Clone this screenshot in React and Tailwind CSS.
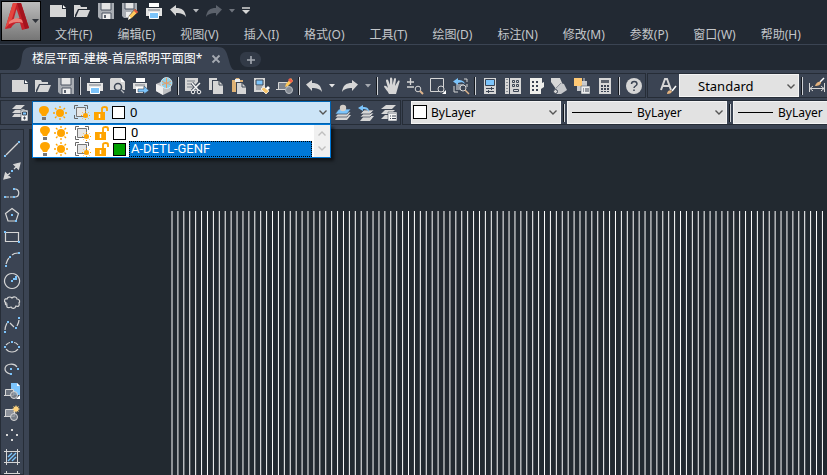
import { useState } from 'react';

const GREY = '#d6d6d6';
const BLUE = '#7cc4fb';
const ORANGE = '#ffa400';
const DARK = '#3b4453';

const Icon = ({ children, className = 'w-4 h-4', box = '0 0 16 16' }) => (
  <svg viewBox={box} className={`${className} shrink-0 overflow-visible`} fill="none" aria-hidden="true">
    {children}
  </svg>
);

/* File icons */
const NewIcon = () => (
  <Icon>
    <path d="M0 2h12v4h4v8H0z" fill={GREY} />
    <path d="M13 2l3 3h-3z" fill="#fff" />
  </Icon>
);

const OpenIcon = () => (
  <Icon>
    <path d="M0 2h6l1 2h6v2H4l-3 6v2H0z" fill={GREY} />
    <path d="M5 7h11l-3 7H2z" fill={GREY} />
  </Icon>
);

const SaveIcon = () => (
  <Icon>
    <path d="M0 0h16v16H2l-2-2z" fill="#a9adb3" />
    <path d="M3 0h10v7H3z" fill="#e4e4e4" />
    <path d="M3 0v7h10V0" stroke="#4b5361" />
    <path d="M4 10h9v6H4z" fill="#eee" />
    <path d="M4 16v-6h9v6" stroke="#4b5361" />
    <path d="M6 12h2v3H6z" fill="#59606c" />
  </Icon>
);

const SaveAsIcon = () => (
  <Icon>
    <path d="M0 0h15v7l-7 8H2l-2-2z" fill="#a9adb3" />
    <path d="M3 0h9v6H3z" fill="#e4e4e4" />
    <path d="M3 0v6h9V0" stroke="#4b5361" />
    <path d="M4 9h5v5H4z" fill="#eee" />
    <path d="M13 6l3 3-6 6-4 2 1-4z" fill="#ffc85a" stroke="#222933" strokeWidth=".5" />
    <path d="M13 6l3 3-1.500 1.500-3-3z" fill="#e2593f" />
    <path d="M7 13l2 2-3 2z" fill="#fff" />
  </Icon>
);

const PrintIcon = () => (
  <Icon>
    <path d="M3 0h10v4H3z" fill="#fff" />
    <path d="M0 5h16v8H0z" fill="#e4e4e4" />
    <path d="M2 7h12" stroke="#777d87" />
    <path d="M3.500 9.500h9v6h-9z" fill={BLUE} stroke="#fff" />
  </Icon>
);

const PreviewIcon = () => (
  <Icon>
    <path d="M1 0h10l4 4v8H0V1z" fill={GREY} />
    <path d="M11 0l4 4h-4z" fill="#fff" />
    <circle cx="8" cy="9" r="3.500" fill={GREY} stroke={DARK} strokeWidth="1.500" />
    <path d="M10.500 11.500l4 4" stroke={DARK} strokeWidth="3" />
    <path d="M11 12l3 3" stroke="#b4b8be" strokeWidth="1.200" />
  </Icon>
);

const PublishIcon = () => (
  <Icon>
    <path d="M3 0h9v4H3z" fill="#fff" />
    <path d="M0 5h14v6H0z" fill="#dedede" />
    <path d="M2 7h10" stroke="#777d87" />
    <path d="M3 9h7v6H3z" fill="#fff" />
    <path d="M5 11h6V8l5 4.500-5 3.500v-2H5z" fill={BLUE} stroke={DARK} strokeWidth=".6" />
  </Icon>
);

const GlobeIcon = () => (
  <Icon>
    <path d="M0 6l7-3 8 3v7l-8 4-7-4z" fill="#bfc1c4" />
    <path d="M0 6l7 3v8l-7-4z" fill="#ededed" />
    <circle cx="10.500" cy="5" r="5.500" fill="#8fd0e8" stroke="#dff3fa" strokeWidth=".8" />
    <path d="M6 3c3 3 6 2 9 0M6 7c3-2 6-2 9 0M10.500 0v10" stroke="#e99a62" />
  </Icon>
);

const CutIcon = () => (
  <Icon>
    <path d="M0 0h13v13H0z" fill={GREY} />
    <path d="M2 3h8M2 6h7M2 9h6" stroke="#7b818a" />
    <path d="M7 5l7 8M14 5l-7 8" stroke={DARK} strokeWidth="3" />
    <path d="M7 5l7 8M15 5l-8 8" stroke="#f5f5f5" strokeWidth="1.500" />
    <circle cx="8" cy="14" r="1.800" fill={DARK} stroke="#f5f5f5" />
    <circle cx="14" cy="14" r="1.800" fill={DARK} stroke="#f5f5f5" />
  </Icon>
);

const CopyIcon = () => (
  <Icon>
    <path d="M1 0h8v2H4v10H1z" fill={GREY} />
    <path d="M5 3h6l4 4v9H5z" fill={GREY} />
    <path d="M11 3v4h4" stroke={DARK} />
  </Icon>
);

const PasteIcon = () => (
  <Icon>
    <path d="M1 2h3l1-2h3l1 2h3v2H5v10H1z" fill="#dfb275" />
    <path d="M4 1h5v3H4z" fill="#eee" />
    <path d="M6 5h5l4 4v7H6z" fill={GREY} />
    <path d="M11 5v4h4" stroke={DARK} />
  </Icon>
);

const MatchIcon = () => (
  <Icon>
    <path d="M0 0h11v14H0z" fill={GREY} />
    <path d="M2 2h7v5H2z" fill={BLUE} stroke={DARK} />
    <path d="M2 9h6M2 11h5" stroke="#6f7681" />
    <path d="M14 8l2 2-3 3-2-2z" fill="#fff" />
    <path d="M7 11l3-2 5 4-3 3z" fill="#f7c66f" stroke="#fff" strokeWidth=".7" />
  </Icon>
);

const BlockEditIcon = () => (
  <Icon>
    <path d="M1.500 4.500h9v7h-9zM-1 11.500h3" fill="#7c828c" stroke={GREY} />
    <circle cx="12" cy="12" r="3.500" fill="#858b94" stroke="#b9bdc3" />
    <path d="M14 0l2 3-5 5-3 1 1-3z" fill="#ffc85a" />
    <path d="M13 0l3 3-2 2-3-3z" fill="#f0604c" />
  </Icon>
);

const UndoIcon = ({ color = GREY }) => (
  <Icon>
    <path d="M0 6.500L6 2v3c6 0 9 2 10 9-2-3-5-4-10-4v3z" fill={color} />
  </Icon>
);

const RedoIcon = ({ color = GREY }) => (
  <Icon>
    <path d="M16 6.500L10 2v3C4 5 1 7 0 14c2-3 5-4 10-4v3z" fill={color} />
  </Icon>
);

const CaretIcon = ({ color = '#e4e4e4' }) => (
  <Icon className="w-[6px] h-[4px]" box="0 0 6 4">
    <path d="M0 0h6L3 3.500z" fill={color} />
  </Icon>
);

const CustomizeIcon = () => (
  <Icon className="w-2 h-2" box="0 0 8 8">
    <path d="M0 1h8" stroke={GREY} strokeWidth="1.500" />
    <path d="M0 3h8L4 7z" fill={GREY} />
  </Icon>
);

/* View icons */
const PanIcon = () => (
  <Icon>
    <path d="M5 16c-1-3-5-6-5-8 2-1 3 1 4 2L2 3c0-2 2-2 2.500 0L6 7V1c0-2 2-2 2.300 0L8.500 7l1.500-6c.5-1.500 2-1 2 .5L11 8l3-5c1-1 2 0 1.500 1L12 16z" fill={GREY} />
  </Icon>
);

const ZoomIcon = () => (
  <Icon>
    <path d="M0 4h7M3.500 0v7M0 9h7" stroke={GREY} strokeWidth="1.300" />
    <circle cx="11" cy="11" r="2.800" stroke={GREY} />
    <path d="M13 13l3 3" stroke="#dfb58c" strokeWidth="2" />
  </Icon>
);

const ZoomWindowIcon = () => (
  <Icon>
    <path d="M.5.5h13v13H.5z" stroke={GREY} />
    <circle cx="11" cy="11" r="3" fill={DARK} stroke={GREY} />
    <path d="M16 12v4h-4z" fill="#fff" />
  </Icon>
);

const ZoomPreviousIcon = () => (
  <Icon>
    <path d="M11 1h3v3M1 8v6h4M14 6v3" stroke={GREY} />
    <path d="M3 6h8v6H3z" fill="#8f959e" />
    <path d="M0 3.500L5 0v2c4 0 6 1 7 4-2-2-4-2-7-1v2z" fill={BLUE} />
    <circle cx="10" cy="10" r="3" fill={DARK} stroke={GREY} />
    <path d="M12 12l4 4" stroke="#dfb58c" strokeWidth="1.500" />
  </Icon>
);

const PropertiesIcon = () => (
  <Icon>
    <path d="M2 0h12v16H2z" fill={GREY} />
    <path d="M3.500 1.500h9v6h-9z" fill={BLUE} stroke={DARK} />
    <path d="M4 10.500h8M4 13.500h8M9.500 9v3M6.500 12v3" stroke={DARK} />
  </Icon>
);

const DesignCenterIcon = () => (
  <Icon>
    <path d="M0 0h4v16H0zM5 0h11v16H5z" fill={GREY} />
    <path d="M2 1v14" stroke={DARK} strokeDasharray="1 2" />
    <path d="M7.500 2.500h2v2h-2zM11.500 2.500h2v2h-2zM7.500 6.500h2v2h-2zM11.500 6.500h2v2h-2zM8.500 11.500h5v2h-5z" stroke={DARK} />
  </Icon>
);

const PalettesIcon = () => (
  <Icon>
    <path d="M2 0h12v5l2-1v5l-3 2v5H2z" fill="#efefec" />
    <path d="M4 3h2v2H4zM8 3h2v2H8zM4 7h2v2H4zM8 7h2v2H8zM4 11h2v2H4zM8 11h2v2H8z" fill={DARK} />
  </Icon>
);

const SheetSetIcon = () => (
  <Icon>
    <path d="M0 0h9l2 5-6 6-5-7z" fill={GREY} />
    <path d="M3 13L10 5l3 1 3 6-6 4H5z" fill="#c6c8cb" />
    <path d="M10 5l-7 7" stroke="#8b9099" />
    <circle cx="4.500" cy="13.500" r="2" fill={GREY} stroke={DARK} />
  </Icon>
);

const MarkupIcon = () => (
  <Icon>
    <path d="M5 3h8v6H5zM3 8h5v5H3z" fill="#c7c9cc" />
    <path d="M0 0h8v8H0z" fill="#ffc974" />
    <path d="M10 0v5" stroke={GREY} />
    <path d="M7 8h9v8H7z" fill="#eee" stroke={DARK} strokeWidth=".5" />
    <path d="M9 11h1M11 11h4M9 13h1M11 13h4" stroke={DARK} />
  </Icon>
);

const CalcIcon = () => (
  <Icon>
    <path d="M2 0h12v16H2z" fill={GREY} />
    <path d="M4 2h8v3H4z" fill="#5b626d" />
    <path d="M4 7h2v2H4zM7 7h2v2H7zM10 7h2v2h-2zM4 10h2v2H4zM7 10h2v2H7zM10 10h2v2h-2zM4 13h2v1H4zM7 13h2v1H7zM10 13h2v1h-2z" fill={DARK} />
  </Icon>
);

const HelpIcon = () => (
  <Icon>
    <circle cx="8" cy="8" r="8" fill={GREY} />
    <path d="M5.500 6c0-3.500 5.500-3.500 5.500 0 0 2-3 2-3 4M8 11.500v1.500" stroke={DARK} strokeWidth="1.500" />
  </Icon>
);

const TextStyleIcon = () => (
  <Icon>
    <path d="M1 12L5 1h2l4 11M3 8h6" stroke={GREY} strokeWidth="2" />
    <path d="M16 8l-4 5" stroke="#fff" strokeWidth="1.500" />
    <path d="M7 16c0-3 3-5 5-3 0 2-2 3-5 3z" fill="#e4b27d" />
  </Icon>
);

const DimStyleIcon = () => (
  <Icon>
    <path d="M0.500 5v9M15.500 5v9M1 10.500h14M4 8l-3 2.500L4 13M12 8l3 2.500-3 2.500" stroke={GREY} />
    <path d="M15 0l-4 4" stroke="#fff" strokeWidth="1.500" />
    <path d="M6 8c1-3 3-5 6-4 0 3-3 4-6 4z" fill="#e4b27d" />
  </Icon>
);

/* Layer icons */
const LayerPropsIcon = () => (
  <Icon>
    <path d="M4 0h9l-4 4H0zM4 4h9l-4 4H0zM3 8h6v4H0z" fill={GREY} />
    <path d="M0 4.500h9l4-4M0 8.500h9" stroke={DARK} strokeWidth=".8" />
    <path d="M9 5h7v11H9z" fill="#f5f5f5" stroke={DARK} strokeWidth=".6" />
    <path d="M10.500 7h4v3h-4z" fill={BLUE} stroke={DARK} />
    <path d="M11 13h3M12.500 11.500v3" stroke={DARK} />
  </Icon>
);

const LayerCurrentIcon = () => (
  <Icon>
    <path d="M4 10h12l-4 5H0z" fill={GREY} />
    <path d="M4 7h12l-4 5H0z" fill={GREY} stroke={DARK} strokeWidth=".7" />
    <path d="M4 4h12l-4 5H0z" fill={BLUE} stroke={DARK} strokeWidth=".7" />
    <circle cx="8" cy="3" r="3.200" fill="#d5cfc8" />
  </Icon>
);

const LayerPreviousIcon = () => (
  <Icon>
    <path d="M6 11h10l-4 5H2z" fill={GREY} />
    <path d="M6 8h10l-4 4H2z" fill={GREY} stroke={DARK} strokeWidth=".7" />
    <path d="M6 5h10l-4 4H2z" fill={GREY} stroke={DARK} strokeWidth=".7" />
    <path d="M0 3l5-3v2c4 0 6 1 6 5-1-2-3-3-6-3v2z" fill={BLUE} />
  </Icon>
);

const LayerStatesIcon = () => (
  <Icon>
    <path d="M5 0h10l-4 4H0zM4 5h10l-4 4H0zM4 10h5v4H0z" fill={GREY} />
    <path d="M7 7h9v9H7z" fill="#f5f5f5" stroke={DARK} strokeWidth=".6" />
    <path d="M7 8.500h9" stroke="#b5b8bd" />
    <path d="M9 11h1M11 11h4M9 13.500h1M11 13.500h4" stroke={DARK} />
  </Icon>
);

const BulbIcon = () => (
  <Icon className="w-[10px] h-[14px]" box="0 0 10 14">
    <path d="M5 0c6 0 6 6 3 8l-1 2H3L2 8C-1 6-1 0 5 0z" fill={ORANGE} />
    <path d="M3 11h4v3H3z" fill="#777" />
  </Icon>
);

const SunIcon = () => (
  <Icon className="w-[14px] h-[14px]" box="0 0 14 14">
    <circle cx="7" cy="7" r="4" fill={ORANGE} />
    <path d="M7 0v2M7 12v2M0 7h2M12 7h2M2 2l1.500 1.500M10.500 10.500L12 12M12 2l-1.500 1.500M3.500 10.500L2 12" stroke={ORANGE} strokeWidth="1.300" />
  </Icon>
);

const ViewportFreezeIcon = () => (
  <Icon className="w-[16px] h-[15px]" box="0 0 16 15">
    <path d="M.5 4V.5H4M10 .5h3.500V4M.5 10v3.500H4" stroke="#666" />
    <path d="M2.500 2.500h9v9h-9z" fill="#e6e6e6" stroke="#777" />
    <circle cx="11.500" cy="10.500" r="2.500" fill={ORANGE} />
    <path d="M11.500 6v1M11.500 14v1M7 10.500h1M15 10.500h1M8.500 7.500l.7.7M14.500 7.500l-.7.7M8.500 13.500l.7-.7M14.500 13.500l-.7-.7" stroke={ORANGE} />
  </Icon>
);

const UnlockIcon = () => (
  <Icon className="w-[14px] h-[14px]" box="0 0 14 14">
    <path d="M0 6h11v8H0z" fill={ORANGE} />
    <path d="M8 6V2.500C8 .5 13 .5 13 2.500V5" stroke={ORANGE} strokeWidth="1.800" />
    <path d="M5.500 8v4" stroke="#fff" strokeWidth="1.500" />
  </Icon>
);

const LayerFlags = () => (
  <span className="flex items-center">
    <BulbIcon />
    <span className="w-1" />
    <SunIcon />
    <span className="w-[7px]" />
    <ViewportFreezeIcon />
    <span className="w-1" />
    <UnlockIcon />
  </span>
);

const Chevron = ({ className = 'w-2 h-[5px]', color = '#555', up = false }) => (
  <Icon className={className} box="0 0 8 5">
    <path d={up ? 'M.5 4.500L4 1l3.500 3.500' : 'M.5.5L4 4 7.500.5'} stroke={color} strokeWidth="1.400" />
  </Icon>
);

/* Draw toolbar: path strokes plus blue grips */
const drawTools = [
  { name: 'Line', d: 'M2 14L14 2', grips: [[1, 15], [15, 1]] },
  { name: 'Construction line', d: 'M2 14l4-4M10 6l4-4M16 0l-6 1.500L14.500 6zM0 16l1.500-6L6 14.500z', grips: [[8, 8]], solid: true },
  { name: 'Polyline', d: 'M2 12h3M6 12h3M11 12c5 0 5-8 0-8', grips: [[1, 12], [10, 12], [10, 4]] },
  { name: 'Polygon', d: 'M8 1.500l6.500 5-2.500 7.500H4L1.500 6.500z', grips: [[8, 8], [12, 14]] },
  { name: 'Rectangle', d: 'M1.500 3.500h13v9h-13z', grips: [[1, 3], [15, 13]] },
  { name: 'Arc', d: 'M2 13c1-2 1-4 3-6M8 4c2-2 4-2 6-2', grips: [[2, 15], [6, 6], [15, 2]] },
  { name: 'Circle', d: 'M8 .5a7.500 7.500 0 1 0 .1 0', grips: [[8, 8], [12, 4], [10, 6], [12, 6]] },
  { name: 'Revision cloud', d: 'M2 8C-1 6 1 3 3 4c1-3 4-2 5-1 2-2 5-1 5 1 3 0 3 3 2 4 1 3-1 4-3 3-1 3-4 3-5 1-2 1-5 1-4-2-2 0-2-2-1-2z', grips: [] },
  { name: 'Spline', d: 'M1 13c0-3 1-5 2-7M6 6l4 4M13 9c1-2 2-4 2-6', grips: [[1, 15], [4, 5], [12, 11], [15, 1]] },
  { name: 'Ellipse', d: 'M2 6C4 4 5 3.500 6 3.500M10 3.500c2 0 3 1 4 2.500M2 10c3 4 9 4 12 0', grips: [[1, 8], [8, 3], [15, 8]] },
  { name: 'Ellipse arc', d: 'M13 6C10 1 1 3 1 8c0 3 2 4 5 5', grips: [[7, 8], [14, 8], [7, 13]] },
];

const DrawIcon = ({ tool }) => (
  <Icon>
    <path d={tool.d} stroke={GREY} strokeWidth="1.200" fill={tool.solid ? GREY : 'none'} />
    {tool.grips.map(([x, y]) => (
      <rect key={`${x}-${y}`} x={x - 1} y={y - 1} width="2" height="2" fill={BLUE} />
    ))}
  </Icon>
);

const InsertBlockIcon = () => (
  <Icon>
    <path d="M7 0h6l3 3v9H7z" fill={BLUE} />
    <path d="M13 0v3h3" fill="#fff" />
    <path d="M1.500 6.500h8v6h-8zM0 12.500h3" fill="#6d747f" stroke={GREY} />
    <circle cx="10" cy="12" r="3.500" fill="#858b94" fillOpacity=".8" stroke={GREY} />
    <path d="M16 12v4h-4z" fill="#fff" />
  </Icon>
);

const MakeBlockIcon = () => (
  <Icon>
    <path d="M1.500 4.500h9v7h-9zM0 11.500h3" fill="#8d929b" stroke={GREY} />
    <circle cx="10" cy="12" r="3.500" fill="#858b94" fillOpacity=".8" stroke={GREY} />
    <path d="M12 0l1 2 2-1-1 2 2 1-2 1 1 2-2-1-1 2-1-2-2 1 1-2-2-1 2-1-1-2 2 1z" fill="#ffd37d" />
  </Icon>
);

const PointIcon = () => (
  <Icon>
    <path d="M7 2h2v2H7zM2 7h2v2H2zM12 7h2v2h-2zM7 12h2v2H7z" fill={GREY} />
  </Icon>
);

const HatchIcon = () => (
  <Icon>
    <path d="M2.500 0v16M13.500 0v16M0 2.500h16M0 13.500h16" stroke={GREY} />
    <path d="M4 8l4-4M4 12l8-8M8 12l4-4" stroke={BLUE} strokeWidth="1.400" />
  </Icon>
);

const GradientIcon = () => (
  <Icon>
    <path d="M2.500 0v16M13.500 0v16M0 2.500h16M0 13.500h16" stroke={GREY} />
    <path d="M4 4h8v8H4z" fill={BLUE} />
  </Icon>
);

const ToolButton = ({ label, children, className = 'w-[23px]' }) => (
  <button type="button" aria-label={label} className={`${className} h-[22px] shrink-0 flex items-center justify-center`}>
    {children}
  </button>
);

const Separator = () => (
  <span className="w-[6px] shrink-0 flex justify-center">
    <span className="w-[2px] h-[18px] bg-[#cfd2d6] border-l border-[#14181e]" />
  </span>
);

const menus = [
  '文件(F)', '编辑(E)', '视图(V)', '插入(I)', '格式(O)', '工具(T)',
  '绘图(D)', '标注(N)', '修改(M)', '参数(P)', '窗口(W)', '帮助(H)',
];

const layers = [
  { name: '0', swatch: 'bg-white' },
  { name: 'A-DETL-GENF', swatch: 'bg-[#00a000]' },
];

const TitleBar = () => (
  <header className="flex h-[44px] shrink-0">
    <button type="button" aria-label="Application menu" className="w-[40px] h-[40px] mt-px ml-px shrink-0 flex items-start border border-black bg-gradient-to-b from-[#bdbdbd] to-[#767676] pl-[3px] pt-px">
      <Icon className="w-6 h-[27px]" box="0 0 24 27">
        <path d="M8 0h8l8 25-7 2-2-7c-4-1-7 1-9 5l-6 1z" fill="#c5202a" />
        <path d="M8 0h4L6 19l-6 7z" fill="#e5463f" />
        <path d="M16 0l8 25-4 1L12 0z" fill="#a4141e" />
        <path d="M11.500 6l3 9-6 2z" fill="#999" />
        <path d="M4 19c4-4 9-5 13-2l1 3c-5-2-9-1-14 1z" fill="#ee8179" />
      </Icon>
      <span className="w-[3px]" />
      <Icon className="w-[7px] h-[5px] mt-4" box="0 0 7 5">
        <path d="M0 0h7L3.500 4z" fill="#30343b" />
      </Icon>
    </button>
    <div className="flex-1 min-w-0">
      <div className="flex items-center h-[22px] pl-[5px]">
        <ToolButton label="New" className="w-6"><NewIcon /></ToolButton>
        <ToolButton label="Open" className="w-6"><OpenIcon /></ToolButton>
        <ToolButton label="Save" className="w-6"><SaveIcon /></ToolButton>
        <ToolButton label="Save as" className="w-6"><SaveAsIcon /></ToolButton>
        <ToolButton label="Print" className="w-6"><PrintIcon /></ToolButton>
        <ToolButton label="Undo" className="w-6"><UndoIcon /></ToolButton>
        <ToolButton label="Undo list" className="w-3"><CaretIcon color="#b5b8bc" /></ToolButton>
        <ToolButton label="Redo" className="w-6"><RedoIcon color="#5c626c" /></ToolButton>
        <ToolButton label="Redo list" className="w-3"><CaretIcon color="#70757e" /></ToolButton>
        <ToolButton label="Customize" className="w-4"><CustomizeIcon /></ToolButton>
      </div>
      <nav className="flex items-center gap-[25px] h-[24px] pl-[14px] pt-px text-[12px] text-[#c3c6ca] whitespace-nowrap">
        {menus.map((menu) => (
          <button key={menu} type="button" className="shrink-0">{menu}</button>
        ))}
      </nav>
    </div>
  </header>
);

const FileTabs = () => (
  <div className="flex items-end h-[26px] shrink-0 border-t border-[#3b4453] pl-[16px]">
    <div className="relative flex items-center h-[23px] pl-4 pr-[14px]">
      <svg className="absolute inset-0 w-full h-full" viewBox="0 0 220 24" preserveAspectRatio="none" aria-hidden="true">
        <path d="M0 24c5-2 5-7 6-14 1-8 4-10 11-10h186c8 0 9 5 11 12 2 8 3 11 6 12z" fill="#3b4453" />
      </svg>
      <button type="button" className="relative text-[12px] leading-6 text-white whitespace-nowrap">楼层平面-建模-首层照明平面图*</button>
      <button type="button" aria-label="Close tab" className="relative ml-[10px]">
        <Icon className="w-2 h-2" box="0 0 8 8">
          <path d="M.5.5l7 7M7.500.5l-7 7" stroke="#a5aab2" strokeWidth="1.800" />
        </Icon>
      </button>
    </div>
    <button type="button" aria-label="New tab" className="w-[21px] h-[15px] ml-[6px] mb-[3px] flex items-center justify-center bg-[#323a47] rounded-tl-md rounded-br-lg rounded-tr-lg rounded-bl-lg">
      <Icon className="w-2 h-2" box="0 0 8 8">
        <path d="M4 0v8M0 4h8" stroke="#a5aab2" strokeWidth="1.600" />
      </Icon>
    </button>
  </div>
);

const StandardToolbar = () => (
  <div className="flex h-[25px] shrink-0">
    <div className="flex items-center shrink-0 border border-[#262d37] pl-[7px]">
      <ToolButton label="New"><NewIcon /></ToolButton>
      <ToolButton label="Open"><OpenIcon /></ToolButton>
      <ToolButton label="Save"><SaveIcon /></ToolButton>
      <Separator />
      <ToolButton label="Print"><PrintIcon /></ToolButton>
      <ToolButton label="Preview"><PreviewIcon /></ToolButton>
      <ToolButton label="Publish"><PublishIcon /></ToolButton>
      <ToolButton label="3D print"><GlobeIcon /></ToolButton>
      <Separator />
      <ToolButton label="Cut"><CutIcon /></ToolButton>
      <ToolButton label="Copy"><CopyIcon /></ToolButton>
      <ToolButton label="Paste"><PasteIcon /></ToolButton>
      <ToolButton label="Match properties"><MatchIcon /></ToolButton>
      <ToolButton label="Block editor"><BlockEditIcon /></ToolButton>
      <Separator />
      <ToolButton label="Undo"><UndoIcon /></ToolButton>
      <ToolButton label="Undo list" className="w-[13px]"><CaretIcon /></ToolButton>
      <ToolButton label="Redo"><RedoIcon /></ToolButton>
      <ToolButton label="Redo list" className="w-[13px]"><CaretIcon color="#a5a9b0" /></ToolButton>
      <Separator />
      <ToolButton label="Pan"><PanIcon /></ToolButton>
      <ToolButton label="Zoom realtime"><ZoomIcon /></ToolButton>
      <ToolButton label="Zoom window"><ZoomWindowIcon /></ToolButton>
      <ToolButton label="Zoom previous"><ZoomPreviousIcon /></ToolButton>
      <Separator />
      <ToolButton label="Properties"><PropertiesIcon /></ToolButton>
      <ToolButton label="Design center"><DesignCenterIcon /></ToolButton>
      <ToolButton label="Tool palettes"><PalettesIcon /></ToolButton>
      <ToolButton label="Sheet set"><SheetSetIcon /></ToolButton>
      <ToolButton label="Markup"><MarkupIcon /></ToolButton>
      <ToolButton label="Calculator"><CalcIcon /></ToolButton>
      <Separator />
      <ToolButton label="Help"><HelpIcon /></ToolButton>
    </div>
    <div className="flex flex-1 min-w-0 items-center overflow-hidden border border-r-0 border-[#262d37] ml-px pl-2">
      <ToolButton label="Text style"><TextStyleIcon /></ToolButton>
      <div className="relative shrink-0">
        <select aria-label="Text style" className="appearance-none block w-[120px] h-[23px] bg-[#e2e2e2] border border-[#f4f4f4] pl-[18px] pt-[2px] text-[13px] text-black">
          <option>Standard</option>
        </select>
        <span className="absolute right-1 top-[10px] pointer-events-none"><Chevron className="w-2 h-[5px] block" /></span>
      </div>
      <Separator />
      <ToolButton label="Dimension style"><DimStyleIcon /></ToolButton>
    </div>
  </div>
);

const LayerSelect = () => {
  const [active, setActive] = useState('A-DETL-GENF');

  return (
    <div className="relative w-[299px] ml-px shrink-0">
      <select aria-label="Layer" className="appearance-none block w-full h-[23px] bg-[#cce4f7] border border-[#0063b1] pl-[97px] text-[13px] text-black">
        {layers.map((layer) => (
          <option key={layer.name}>{layer.name}</option>
        ))}
      </select>
      <span className="absolute left-[7px] top-1 flex items-center pointer-events-none">
        <LayerFlags />
        <span className="w-[13px] h-[13px] ml-1 bg-white border border-black" />
      </span>
      <span className="absolute right-1 top-[9px] pointer-events-none"><Chevron className="w-2 h-[5px] block" /></span>

      {/* Open list */}
      <div className="absolute left-0 top-[23px] z-10 w-full flex bg-white border border-[#0078d7] shadow-[3px_3px_3px_rgba(0,0,0,0.5)]">
        <ul role="listbox" aria-label="Layers" className="flex-1 pr-[2px]">
          {layers.map((layer) => (
            <li
              key={layer.name}
              role="option"
              aria-selected={layer.name === active}
              onClick={() => setActive(layer.name)}
              className="flex items-center h-4 pl-[7px]"
            >
              <LayerFlags />
              <span className={`w-[13px] h-[13px] ml-1 border border-black ${layer.swatch}`} />
              <span className={`flex-1 ml-[3px] pl-px h-4 leading-[14px] border border-dotted text-[13px] font-[Roboto,sans-serif] ${
                layer.name === active ? 'bg-[#0078d7] border-black text-white' : 'border-transparent text-black'
              }`}>
                {layer.name}
              </span>
            </li>
          ))}
        </ul>
        <div className="w-4 flex flex-col items-center justify-between py-[6px] bg-[#f0f0f0]">
          <Chevron up color="#bfbfbf" />
          <Chevron color="#bfbfbf" />
        </div>
      </div>
    </div>
  );
};

const LineSelect = ({ label, padding, sample }) => (
  <div className="relative shrink-0">
    <select aria-label={label} className={`appearance-none block w-[160px] h-[23px] bg-[#e2e2e2] border border-[#f4f4f4] pt-px text-[12px] text-black ${padding}`}>
      <option>ByLayer</option>
    </select>
    <span className={`absolute left-[5px] top-[11px] h-px bg-black pointer-events-none ${sample}`} />
    <span className="absolute right-1 top-[9px] pointer-events-none"><Chevron className="w-2 h-[5px] block" /></span>
  </div>
);

const LayerToolbar = () => (
  <div className="flex h-[25px] shrink-0">
    <div className="flex items-center shrink-0 border border-[#262d37] pl-[7px]">
      <ToolButton label="Layer properties"><LayerPropsIcon /></ToolButton>
      <LayerSelect />
      <ToolButton label="Make current"><LayerCurrentIcon /></ToolButton>
      <ToolButton label="Layer previous"><LayerPreviousIcon /></ToolButton>
      <ToolButton label="Layer states"><LayerStatesIcon /></ToolButton>
    </div>
    <div className="flex flex-1 min-w-0 items-center overflow-hidden border border-r-0 border-[#262d37] ml-px pl-2">
      <div className="relative shrink-0">
        <select aria-label="Color" className="appearance-none block w-[150px] h-[23px] bg-[#e2e2e2] border border-[#f4f4f4] pl-[19px] pt-px text-[12px] text-black">
          <option>ByLayer</option>
        </select>
        <span className="absolute left-[2px] top-1 w-[14px] h-[14px] bg-white border border-black pointer-events-none" />
        <span className="absolute right-1 top-[9px] pointer-events-none"><Chevron className="w-2 h-[5px] block" /></span>
      </div>
      <Separator />
      <LineSelect label="Linetype" padding="pl-[69px]" sample="w-[60px]" />
      <Separator />
      <LineSelect label="Lineweight" padding="pl-[44px]" sample="w-[35px]" />
    </div>
  </div>
);

const DrawToolbar = () => (
  <aside className="w-6 shrink-0 overflow-hidden flex flex-col items-center border border-[#262d37] pt-2">
    {drawTools.map((tool) => (
      <ToolButton key={tool.name} label={tool.name}><DrawIcon tool={tool} /></ToolButton>
    ))}
    <ToolButton label="Insert block"><InsertBlockIcon /></ToolButton>
    <ToolButton label="Make block"><MakeBlockIcon /></ToolButton>
    <ToolButton label="Point"><PointIcon /></ToolButton>
    <ToolButton label="Hatch"><HatchIcon /></ToolButton>
    <ToolButton label="Gradient"><GradientIcon /></ToolButton>
  </aside>
);

const LINE_STEP = 5.913;

const Canvas = () => (
  <main className="flex-1 min-w-0 bg-[#222930] pl-[142px] pt-[82px]">
    <svg className="block w-full h-full" role="img" aria-label="Drawing">
      {Array.from({ length: 400 }, (_, i) => (
        <line key={i} x1={1 + i * LINE_STEP} x2={1 + i * LINE_STEP} y1="0" y2="100%" stroke="#fff" />
      ))}
    </svg>
  </main>
);

const App = () => (
  <div className="h-screen overflow-hidden flex flex-col bg-[#222933] font-['Noto_Sans','Noto_Sans_CJK_SC',sans-serif]">
    <TitleBar />
    <FileTabs />
    <div className="flex flex-1 min-h-0 flex-col bg-[#3b4453] pt-[3px]">
      <StandardToolbar />
      <div className="h-[2px] shrink-0" />
      <LayerToolbar />
      <div className="flex flex-1 min-h-0 gap-[5px] pt-1">
        <DrawToolbar />
        <Canvas />
      </div>
    </div>
  </div>
);

export default App;
